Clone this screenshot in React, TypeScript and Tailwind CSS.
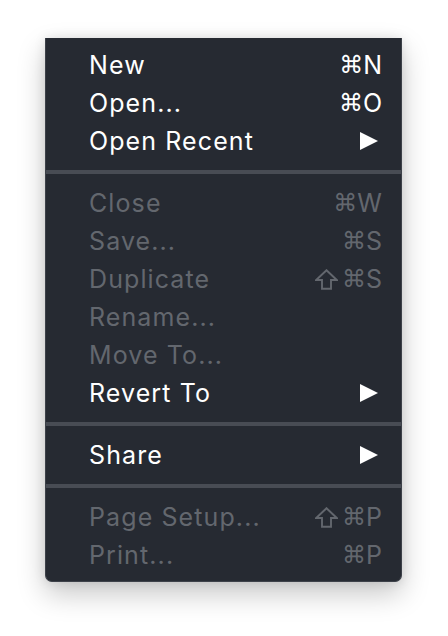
import React from 'react';

type Item =
  | { kind: 'item'; label: string; shortcut?: string; shift?: boolean; submenu?: boolean; disabled?: boolean }
  | { kind: 'sep' };

const items: Item[] = [
  { kind: 'item', label: 'New', shortcut: 'N' },
  { kind: 'item', label: 'Open...', shortcut: 'O' },
  { kind: 'item', label: 'Open Recent', submenu: true },
  { kind: 'sep' },
  { kind: 'item', label: 'Close', shortcut: 'W', disabled: true },
  { kind: 'item', label: 'Save...', shortcut: 'S', disabled: true },
  { kind: 'item', label: 'Duplicate', shortcut: 'S', shift: true, disabled: true },
  { kind: 'item', label: 'Rename...', disabled: true },
  { kind: 'item', label: 'Move To...', disabled: true },
  { kind: 'item', label: 'Revert To', submenu: true },
  { kind: 'sep' },
  { kind: 'item', label: 'Share', submenu: true },
  { kind: 'sep' },
  { kind: 'item', label: 'Page Setup...', shortcut: 'P', shift: true, disabled: true },
  { kind: 'item', label: 'Print...', shortcut: 'P', disabled: true },
];

const Arrow: React.FC = () => (
  <svg width="18" height="18" viewBox="0 0 18 18" className="mr-[4px]">
    <polygon points="0,0 18,9 0,18" fill="currentColor" />
  </svg>
);

const Shift: React.FC = () => (
  <svg width="23" height="21" viewBox="0 0 23 21" className="mr-[4px]">
    <polygon
      points="11.5,1.2 21.8,11 16,11 16,19.8 7,19.8 7,11 1.2,11"
      fill="none"
      stroke="currentColor"
      strokeWidth="1.9"
      strokeLinejoin="miter"
    />
  </svg>
);

const App: React.FC = () => {
  return (
    <div className="min-h-screen bg-white pt-[38px] pl-[45px] font-['Inter','DejaVu_Sans',sans-serif]">
      <div className="w-[357px] bg-[#262a32] border-x border-b border-[#3d4149] rounded-b-[7px] pt-[8px] pb-[7px] shadow-[0_12px_28px_rgba(0,0,0,0.22),0_0_12px_rgba(0,0,0,0.1)]">
        {items.map((item, i) =>
          item.kind === 'sep' ? (
            <div key={i} className="py-[10px]">
              <div className="h-[4px] bg-[#484c54]" />
            </div>
          ) : (
            <div
              key={i}
              className={`h-[38px] flex items-center justify-between pl-[43px] pr-[19px] text-[25px] leading-none ${
                item.disabled ? 'text-[#63676e]' : 'text-white'
              }`}
            >
              <span className="tracking-[1.1px]">{item.label}</span>
              {item.submenu ? (
                <Arrow />
              ) : item.shortcut ? (
                <span className="flex items-center">
                  {item.shift && <Shift />}
                  <span className="font-['DejaVu_Sans'] text-[24px]">⌘</span>
                  <span>{item.shortcut}</span>
                </span>
              ) : null}
            </div>
          )
        )}
      </div>
    </div>
  );
};

export default App;
